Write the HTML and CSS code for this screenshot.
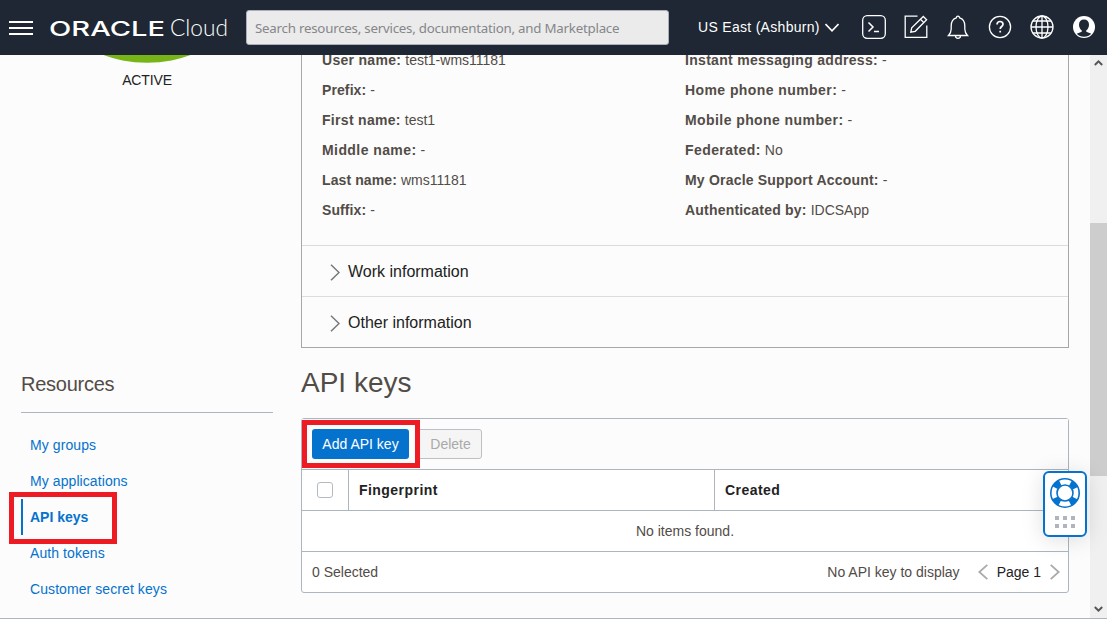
FILE: index.html
```html
<!DOCTYPE html>
<html lang="en">
<head>
<meta charset="utf-8">
<title>Oracle Cloud - API keys</title>
<link rel="stylesheet" href="styles.css">
</head>
<body>
<header class="topbar">
  <svg class="menu" width="24" height="14" viewBox="0 0 24 14" stroke="#fff" stroke-width="2"><path d="M0 1h24M0 7h24M0 13h24"/></svg>
  <svg class="brand" width="180" height="30" viewBox="0 0 180 30" fill="#fff">
    <text class="brand-oracle" x="-1" y="22.500" textLength="116" lengthAdjust="spacingAndGlyphs">ORACLE</text>
    <text class="brand-cloud" x="120" y="22.500" textLength="58" lengthAdjust="spacingAndGlyphs">Cloud</text>
  </svg>
  <div class="search"><span>Search resources, services, documentation, and Marketplace</span></div>
  <div class="region"><span>US East (Ashburn)</span>
    <svg width="14" height="9" viewBox="0 0 14 9" fill="none" stroke="#fff" stroke-width="1.600"><path d="M.5 1 7 7.8 13.500 1"/></svg>
  </div>
  <nav class="tools">
    <svg viewBox="0 0 24 24"><rect x=".7" y=".7" width="22.600" height="22.600" rx="4.500"/><path stroke-width="1.500" d="M6.500 7.500 11 12l-4.500 4.500M12 16.500h5"/></svg>
    <svg viewBox="0 0 24 24"><path d="M13.500 1.200H1.200v21.100h21.600V10.500M6.800 17.200l.9-4.400L19.300 1.500l3.300 3.300L11.200 16.300zM16.500 4.300l3.300 3.300"/></svg>
    <svg viewBox="0 0 24 24"><path d="M2.500 20.500h19c-2-2-2.700-3.500-2.700-6.500v-3c0-4.500-2.300-7.500-5.200-8.200a1.600 1.600 0 0 0-3.200 0C7.500 3.500 5.200 6.500 5.200 11v3c0 3-.7 4.500-2.700 6.500zM9.500 20.800a2.500 2.500 0 0 0 5 0"/></svg>
    <svg viewBox="0 0 24 24"><circle cx="12" cy="12" r="10.600"/><path stroke-width="1.700" d="M9 9.500c0-2 1.200-3 3-3s3 1 3 2.700c0 2.300-2.800 2.300-2.800 4.800M12.200 15.800v1.700"/></svg>
    <svg viewBox="0 0 24 24"><circle cx="12" cy="12" r="11"/><ellipse cx="12" cy="12" rx="6" ry="11"/><path d="M12 1v22M1 12h22M3.200 6h17.600M3.200 18h17.600"/></svg>
    <svg viewBox="0 0 24 24"><circle class="solid" cx="12" cy="12" r="11"/><path class="person" d="M12 4.500c3.200 0 5 2 5 5.200 0 2.600-1.200 4.500-2.700 5.600v1.500l5 1.900c-1.900 2-4.300 3-7.300 3s-5.400-1-7.300-3l5-1.900v-1.500C8.200 14.200 7 12.300 7 9.700c0-3.200 1.800-5.200 5-5.200z"/></svg>
  </nav>
</header>
<main class="viewport">
  <aside class="side">
    <div class="status">
      <svg width="100" height="8" viewBox="0 0 100 8"><circle cx="50" cy="-118" r="125.800" fill="#76b418"/></svg>
      <p>ACTIVE</p>
    </div>
    <h2>Resources</h2>
    <ul class="links">
      <li><a>My groups</a></li>
      <li><a>My applications</a></li>
      <li class="current"><a>API keys</a><span class="mark mark-side"></span></li>
      <li><a>Auth tokens</a></li>
      <li><a>Customer secret keys</a></li>
    </ul>
  </aside>
  <section class="content">
    <div class="card">
      <div class="details">
        <dl>
          <div><dt>User name:</dt><dd>test1-wms11181</dd></div>
          <div><dt class="tight">Prefix:</dt><dd>-</dd></div>
          <div><dt>First name:</dt><dd>test1</dd></div>
          <div><dt class="loose">Middle name:</dt><dd>-</dd></div>
          <div><dt class="tight">Last name:</dt><dd>wms11181</dd></div>
          <div><dt class="tight">Suffix:</dt><dd>-</dd></div>
        </dl>
        <dl>
          <div><dt>Instant messaging address:</dt><dd>-</dd></div>
          <div><dt class="loose">Home phone number:</dt><dd>-</dd></div>
          <div><dt class="loose">Mobile phone number:</dt><dd>-</dd></div>
          <div><dt class="loose">Federated:</dt><dd>No</dd></div>
          <div><dt class="snug">My Oracle Support Account:</dt><dd>-</dd></div>
          <div><dt class="snug">Authenticated by:</dt><dd>IDCSApp</dd></div>
        </dl>
      </div>
      <div class="fold"><svg width="10" height="17" viewBox="0 0 10 17"><path d="M1 .8 9 8.500 1 16.200"/></svg>Work information</div>
      <div class="fold"><svg width="10" height="17" viewBox="0 0 10 17"><path d="M1 .8 9 8.500 1 16.200"/></svg>Other information</div>
    </div>
    <h1>API keys</h1>
    <div class="table">
      <div class="actions">
        <button class="primary">Add API key</button>
        <button class="muted">Delete</button>
        <span class="mark mark-add"></span>
      </div>
      <div class="row head"><div><i class="check"></i></div><div>Fingerprint</div><div>Created</div></div>
      <div class="row empty">No items found.</div>
      <div class="row foot">
        <span>0 Selected</span>
        <span class="none">No API key to display</span>
        <svg width="10" height="16" viewBox="0 0 10 16"><path d="M9.300 .8 1.300 8l8 7.200"/></svg>
        <span class="page">Page 1</span>
        <svg width="10" height="16" viewBox="0 0 10 16"><path d="M.7 .8l8 7.200-8 7.200"/></svg>
      </div>
    </div>
  </section>
  <div class="scrollbar">
    <svg width="9" height="6" viewBox="0 0 9 6"><path d="M.8 5 4.500 1.400 8.200 5"/></svg>
    <div class="thumb"></div>
    <svg width="9" height="6" viewBox="0 0 9 6"><path d="M.8 1 4.500 4.600 8.200 1"/></svg>
  </div>
</main>
<div class="help">
  <svg width="32" height="32" viewBox="0 0 32 32" fill="none" stroke="#0572ce">
    <circle cx="16" cy="16" r="11.300" stroke-width="6" stroke-dasharray="7.100 10.650" stroke-dashoffset="-5.325"/>
    <circle cx="16" cy="16" r="14.200" stroke-width="1.600"/><circle cx="16" cy="16" r="8" stroke-width="1.600"/>
  </svg>
  <div class="dots"><i></i><i></i><i></i><i></i><i></i><i></i></div>
</div>
</body>
</html>
```

FILE: styles.css
```css
* { box-sizing: border-box; }
body { margin: 0; height: 620px; overflow: hidden; background: #fff; color: #524c47; font: 14px/20px "Liberation Sans", Arial, sans-serif; }
h1, h2, p, ul, dl, dd { margin: 0; padding: 0; font-weight: normal; }
ul { list-style: none; }
svg { display: block; flex: none; }

.topbar { height: 55px; background: #1e2733; display: flex; align-items: center; padding: 0 11px 0 9px; color: #fff; }
.brand { margin-left: 17px; }
.brand-oracle { font: 500 20.500px Inter, sans-serif; }
.brand-cloud { font: 300 22.500px Lato, sans-serif; }
.search { width: 423px; height: 35px; margin-left: 16px; padding-left: 8px; border: 1px solid #aab0bb; border-radius: 3px; background: #ebebeb; color: #85868a; font: 13.300px/34px "Noto Sans", sans-serif; letter-spacing: -.23px; white-space: nowrap; }
.region { display: flex; align-items: center; gap: 5px; margin: -1px 0 0 29px; width: 142px; letter-spacing: .3px; white-space: nowrap; }
.tools { display: flex; gap: 18px; margin: -1px 0 0 22px; }
.tools svg { width: 24px; height: 24px; fill: none; stroke: #fff; stroke-width: 1.300; }
.tools .solid { fill: #fff; stroke: none; }
.tools .person { fill: #1e2733; stroke: none; }

.viewport { height: 564px; display: flex; overflow: hidden; background: #fcfcfc; border-bottom: 1px solid #adb5bf; }
.side { width: 273px; padding-left: 21px; flex: none; }
.status { height: 309px; display: flex; flex-direction: column; align-items: center; color: #222; }
.status p { margin-top: 7px; letter-spacing: -.15px; }
.side h2 { height: 49px; padding-top: 8px; font-size: 20px; line-height: 24px; letter-spacing: -.25px; border-bottom: 1px solid #adb5bf; }
.links { padding-top: 14px; color: #0572ce; letter-spacing: .08px; }
.links li { position: relative; height: 36px; line-height: 36px; padding-left: 9px; }
.links .current { font-weight: bold; border-left: 2px solid #0572ce; padding-left: 7px; letter-spacing: 0; }
.mark { position: absolute; border: 5px solid #ed1c24; }
.mark-side { left: -14px; top: -7px; width: 108px; height: 52px; }

.content { width: 768px; margin-left: 28px; flex: none; }
.card { height: 293px; border: 1px solid #a7a7aa; border-top: 0; }
.details { display: flex; height: 190px; padding-left: 20px; }
.details dl { width: 363px; margin-top: -10px; }
.details dl > div { display: flex; gap: 4px; height: 30px; line-height: 30px; }
.details dt { font-weight: bold; letter-spacing: .3px; }
.details .tight { letter-spacing: .1px; }
.details .snug { letter-spacing: .2px; }
.details .loose { letter-spacing: .42px; }
.fold { height: 51px; border-top: 1px solid #dcdcdc; display: flex; align-items: center; gap: 8px; padding: 2px 0 0 28px; color: #222; font-size: 16px; }
.fold svg { fill: none; stroke: #777; stroke-width: 1.500; }
h1 { height: 70px; padding-top: 18px; font-size: 28px; line-height: 34px; }
.table { height: 175px; border: 1px solid #adb5bf; border-radius: 3px; background: #fff; }
.actions { position: relative; height: 50px; padding: 10px; display: flex; gap: 8px; background: #fcfcfc; }
button { height: 30px; padding: 0; border-radius: 3px; font: inherit; }
.primary { width: 97px; border: 0; background: #0572ce; color: #fff; }
.muted { width: 65px; padding-left: 2px; border: 1px solid #bdc0c5; background: #f5f5f5; color: #a9a9a9; }
.mark-add { left: 0; top: 1px; width: 118px; height: 48px; }
.row { height: 41px; border-top: 1px solid #adb5bf; line-height: 40px; }
.head { display: grid; grid-template-columns: 46px 366px 1fr; color: #222; font-weight: bold; letter-spacing: .45px; }
.head > div + div { padding-left: 10px; border-left: 1px solid #adb5bf; }
.check { display: block; width: 16px; height: 16px; margin: 12px 0 0 15px; border: 1px solid #b4b9c2; border-radius: 3px; }
.empty { text-align: center; }
.foot { display: flex; align-items: center; padding: 0 8px 0 10px; }
.foot svg { fill: none; stroke: #aaa; stroke-width: 1.800; }
.none { margin-left: auto; margin-right: 18px; }
.page { margin: 0 9px; color: #222; }

.scrollbar { width: 17px; margin-left: auto; background: #f0f0f0; display: flex; flex-direction: column; align-items: center; padding: 5px 0 6px; }
.scrollbar svg { fill: none; stroke: #555; stroke-width: 2; }
.thumb { width: 17px; height: 253px; margin: 157px 0 auto; background: #cdcdcd; }

.help { position: absolute; left: 1043px; top: 471px; width: 44px; height: 66px; padding-top: 4px; display: flex; flex-direction: column; align-items: center; gap: 7px; border: 2px solid #0572ce; border-radius: 6px; background: #fff; box-shadow: 0 3px 22px rgba(0,0,0,.13); }
.dots { display: grid; grid-template-columns: repeat(3, 4px); gap: 4px; }
.dots i { height: 4px; background: #b0b5bd; }
```
